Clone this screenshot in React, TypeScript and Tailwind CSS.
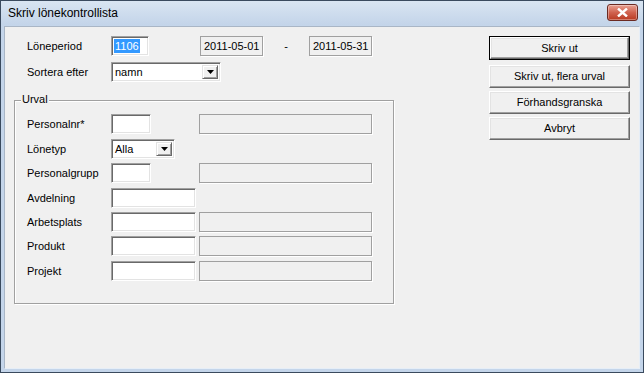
import React from "react";

const sunken =
  "border border-t-[#a0a0a0] border-l-[#a0a0a0] border-b-white border-r-white bg-white shadow-[inset_1px_1px_0_#696969,inset_-1px_-1px_0_#e3e3e3]";
const readonly =
  "border border-[#a0a0a0] bg-[#f0f0f0] shadow-[1px_1px_0_#ffffff]";

function Label({ children, w = "w-[84px]" }: { children: React.ReactNode; w?: string }) {
  return <div className={`${w} shrink-0 leading-none`}>{children}</div>;
}

function Arrow() {
  return (
    <div className="w-[16px] h-full border border-t-[#e3e3e3] border-l-[#e3e3e3] border-b-[#696969] border-r-[#696969] bg-[#f0f0f0] flex items-center justify-center shadow-[inset_1px_1px_0_#fff,inset_-1px_-1px_0_#a0a0a0]">
      <svg width="7" height="4" viewBox="0 0 7 4">
        <path d="M0 0h7L3.5 4z" fill="#000" />
      </svg>
    </div>
  );
}

function Select({ w, value }: { w: string; value: string }) {
  return (
    <div className={`${w} h-[20px] ${sunken} flex items-stretch p-[2px]`}>
      <div className="flex-1 flex items-center pl-[1px] leading-none">{value}</div>
      <Arrow />
    </div>
  );
}

function Btn({ children, def }: { children: React.ReactNode; def?: boolean }) {
  return (
    <div className={`w-[141px] ${def ? "h-[24px] border border-black" : "h-[23px]"} `}>
      <div className="h-full w-full border border-t-white border-l-white border-b-[#696969] border-r-[#696969] bg-[#f0f0f0] shadow-[inset_-1px_-1px_0_#a0a0a0,inset_1px_1px_0_#e3e3e3] flex items-center justify-center leading-none">
        {children}
      </div>
    </div>
  );
}

function Row({ label, input, gray, mt }: { label: string; input: string; gray?: boolean; mt: string }) {
  return (
    <div className={`flex items-center h-[20px] ${mt}`}>
      <Label>{label}</Label>
      <div className={`${input} h-[20px] ${sunken}`} />
      {gray && <div className="flex-1" />}
      {gray && <div className={`w-[173px] h-[20px] ${readonly}`} />}
    </div>
  );
}

export default function App() {
  return (
    <div
      className="w-[644px] h-[373px] border border-[#3a4a5e] bg-[#c4d5ea] flex flex-col text-[11px] text-black"
      style={{ fontFamily: '"Liberation Sans", Arial, sans-serif' }}
    >
      <div className="h-[24px] shrink-0 flex items-center pl-[7px] pr-[5px] bg-gradient-to-b from-[#d9e5f2] to-[#c3d4e9]">
        <div className="text-[12px] leading-none flex-1">Skriv lönekontrollista</div>
        <div className="w-[31px] h-[17px] mt-[-2px] rounded-[3px] border border-[#6b2a22] bg-gradient-to-b from-[#e8a193] via-[#d0624f] to-[#b8381f] flex items-center justify-center shadow-[inset_0_0_0_1px_rgba(255,255,255,0.35)]">
          <svg width="11" height="9" viewBox="0 0 11 9">
            <path d="M1 0.5L10 8.5M10 0.5L1 8.5" stroke="#fff" strokeWidth="2.4" />
          </svg>
        </div>
      </div>
      <div className="flex-1 mx-[3px] mb-[3px] mt-[1px] bg-[#f0f0f0] border border-t-[#a9b6c6] border-l-[#a9b6c6] border-b-[#e6eef7] border-r-[#e6eef7] flex">
        <div className="w-[392px] pl-[9px] pt-[9px] flex flex-col">
          <div className="flex items-center h-[20px] pl-[13px]">
            <Label>Löneperiod</Label>
            <div className={`w-[38px] h-[20px] ${sunken} flex items-center pl-[2px]`}>
              <span className="bg-[#3399ff] text-white leading-[14px] px-[1px]">1106</span>
            </div>
            <div className="w-[51px]" />
            <div className={`w-[63px] h-[20px] ${readonly} flex items-center pl-[3px] leading-none`}>2011-05-01</div>
            <div className="w-[46px] text-center leading-none">-</div>
            <div className={`w-[63px] h-[20px] ${readonly} flex items-center pl-[3px] leading-none`}>2011-05-31</div>
          </div>
          <div className="flex items-center h-[20px] mt-[6px] pl-[13px]">
            <Label>Sortera efter</Label>
            <Select w="w-[110px]" value="namn" />
          </div>
          <div className="relative mt-[18px] w-[380px] h-[204px] border border-[#a0a0a0] shadow-[inset_1px_1px_0_#fff,1px_1px_0_#fff] pl-[12px] pr-[21px]">
            <div className="absolute left-[6px] top-[-7px] bg-[#f0f0f0] px-[1px] leading-none">Urval</div>
            <Row label="Personalnr*" input="w-[40px]" gray mt="mt-[13px]" />
            <div className="flex items-center h-[20px] mt-[5px]">
              <Label>Lönetyp</Label>
              <Select w="w-[64px]" value="Alla" />
            </div>
            <Row label="Personalgrupp" input="w-[40px]" gray mt="mt-[4px]" />
            <Row label="Avdelning" input="w-[85px]" mt="mt-[5px]" />
            <Row label="Arbetsplats" input="w-[85px]" gray mt="mt-[4px]" />
            <Row label="Produkt" input="w-[85px]" gray mt="mt-[4px]" />
            <Row label="Projekt" input="w-[85px]" gray mt="mt-[5px]" />
          </div>
        </div>
        <div className="ml-[92px] pt-[9px] flex flex-col">
          <Btn def>Skriv ut</Btn>
          <div className="mt-[5px]"><Btn>Skriv ut, flera urval</Btn></div>
          <div className="mt-[3px]"><Btn>Förhandsgranska</Btn></div>
          <div className="mt-[3px]"><Btn>Avbryt</Btn></div>
        </div>
      </div>
    </div>
  );
}
